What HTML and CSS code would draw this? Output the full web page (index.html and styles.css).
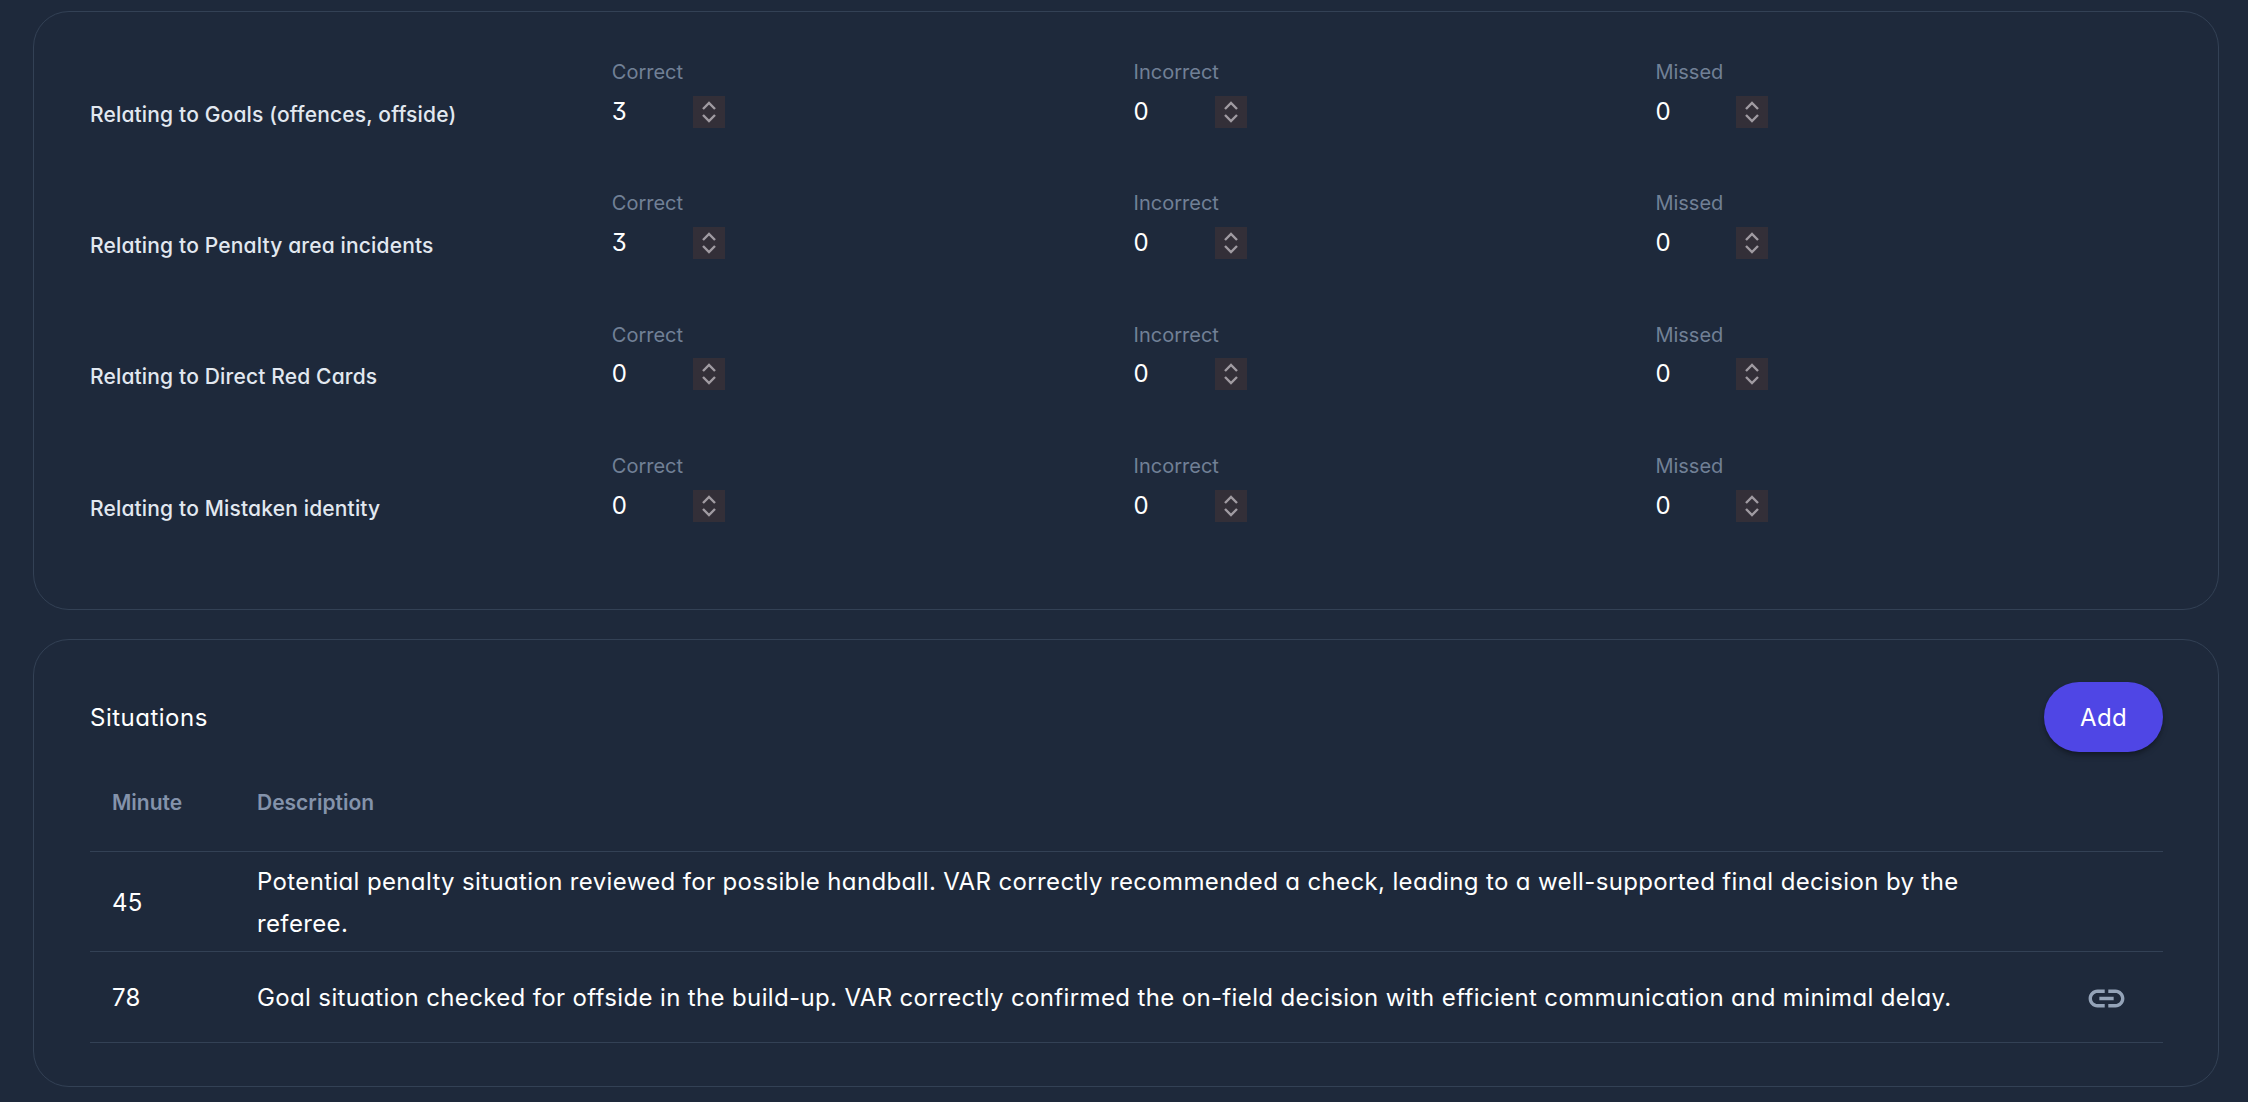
FILE: index.html
```html
<!DOCTYPE html>
<html lang="en">
<head>
    <meta charset="UTF-8">
    <meta name="viewport" content="width=device-width, initial-scale=1.0">
    <title>VAR report</title>
    <link rel="stylesheet" href="styles.css">
</head>
<body>
    <section class="card card-counts">
        <div class="count-row">
            <div class="count-label">Relating to Goals (offences, offside)</div>
            <div class="field"><label>Correct</label><div class="number"><span class="value">3</span><span class="spin"><svg viewBox="0 0 32 32"><path d="M10 13l6-6 6 6M10 19l6 6 6-6"/></svg></span></div></div>
            <div class="field"><label>Incorrect</label><div class="number"><span class="value">0</span><span class="spin"><svg viewBox="0 0 32 32"><path d="M10 13l6-6 6 6M10 19l6 6 6-6"/></svg></span></div></div>
            <div class="field"><label>Missed</label><div class="number"><span class="value">0</span><span class="spin"><svg viewBox="0 0 32 32"><path d="M10 13l6-6 6 6M10 19l6 6 6-6"/></svg></span></div></div>
        </div>
        <div class="count-row">
            <div class="count-label">Relating to Penalty area incidents</div>
            <div class="field"><label>Correct</label><div class="number"><span class="value">3</span><span class="spin"><svg viewBox="0 0 32 32"><path d="M10 13l6-6 6 6M10 19l6 6 6-6"/></svg></span></div></div>
            <div class="field"><label>Incorrect</label><div class="number"><span class="value">0</span><span class="spin"><svg viewBox="0 0 32 32"><path d="M10 13l6-6 6 6M10 19l6 6 6-6"/></svg></span></div></div>
            <div class="field"><label>Missed</label><div class="number"><span class="value">0</span><span class="spin"><svg viewBox="0 0 32 32"><path d="M10 13l6-6 6 6M10 19l6 6 6-6"/></svg></span></div></div>
        </div>
        <div class="count-row">
            <div class="count-label">Relating to Direct Red Cards</div>
            <div class="field"><label>Correct</label><div class="number"><span class="value">0</span><span class="spin"><svg viewBox="0 0 32 32"><path d="M10 13l6-6 6 6M10 19l6 6 6-6"/></svg></span></div></div>
            <div class="field"><label>Incorrect</label><div class="number"><span class="value">0</span><span class="spin"><svg viewBox="0 0 32 32"><path d="M10 13l6-6 6 6M10 19l6 6 6-6"/></svg></span></div></div>
            <div class="field"><label>Missed</label><div class="number"><span class="value">0</span><span class="spin"><svg viewBox="0 0 32 32"><path d="M10 13l6-6 6 6M10 19l6 6 6-6"/></svg></span></div></div>
        </div>
        <div class="count-row">
            <div class="count-label">Relating to Mistaken identity</div>
            <div class="field"><label>Correct</label><div class="number"><span class="value">0</span><span class="spin"><svg viewBox="0 0 32 32"><path d="M10 13l6-6 6 6M10 19l6 6 6-6"/></svg></span></div></div>
            <div class="field"><label>Incorrect</label><div class="number"><span class="value">0</span><span class="spin"><svg viewBox="0 0 32 32"><path d="M10 13l6-6 6 6M10 19l6 6 6-6"/></svg></span></div></div>
            <div class="field"><label>Missed</label><div class="number"><span class="value">0</span><span class="spin"><svg viewBox="0 0 32 32"><path d="M10 13l6-6 6 6M10 19l6 6 6-6"/></svg></span></div></div>
        </div>
    </section>

    <section class="card card-situations">
        <div class="card-header">
            <h2>Situations</h2>
            <button type="button" class="add-button">Add</button>
        </div>
        <table class="situations">
            <thead>
                <tr><th class="col-minute">Minute</th><th>Description</th><th class="col-action"></th></tr>
            </thead>
            <tbody>
                <tr class="row-tall">
                    <td class="col-minute">45</td>
                    <td>Potential penalty situation reviewed for possible handball. VAR correctly recommended a check, leading to a well-supported final decision by the referee.</td>
                    <td class="col-action"></td>
                </tr>
                <tr>
                    <td class="col-minute">78</td>
                    <td>Goal situation checked for offside in the build-up. VAR correctly confirmed the on-field decision with efficient communication and minimal delay.</td>
                    <td class="col-action"><svg class="link-icon" viewBox="0 0 24 24"><path d="M3.900 12c0-1.710 1.390-3.100 3.100-3.100h4V7H7c-2.760 0-5 2.240-5 5s2.240 5 5 5h4v-1.900H7c-1.710 0-3.100-1.390-3.100-3.100zM8 13h8v-2H8v2zm9-6h-4v1.900h4c1.710 0 3.100 1.390 3.100 3.100s-1.390 3.100-3.100 3.100h-4V17h4c2.760 0 5-2.240 5-5s-2.240-5-5-5z"/></svg></td>
                </tr>
            </tbody>
        </table>
    </section>
</body>
</html>
```

FILE: styles.css
```css
* {
    box-sizing: border-box;
}
body {
    margin: 0;
    padding: 11px 29px 15px 33px;
    background-color: #1e293b;
    color: #fff;
    font-family: Inter, "Noto Sans", sans-serif;
    font-feature-settings: "cv09", "cv11";
    font-size: 24px;
}
.card {
    border: 1px solid #334155;
    border-radius: 36px;
    padding: 0 55px 0 56px;
}
.card-counts {
    height: 599px;
    padding-top: 44px;
    margin-bottom: 29px;
}
.card-situations {
    height: 448px;
    padding-top: 42px;
}
.count-row {
    display: grid;
    grid-template-columns: repeat(3, 521.8px) 1fr;
    align-items: end;
    height: 131.4px;
    padding-bottom: 52px;
}
.count-label {
    margin-bottom: -3px;
    font-size: 21px;
    font-weight: 500;
    line-height: 48px;
    letter-spacing: 0.16px;
    color: #e2e8f0;
}
.field label {
    display: block;
    padding-top: 1px;
    font-size: 20px;
    line-height: 30.5px;
    color: #718096;
}
.number {
    display: flex;
    align-items: center;
    height: 48px;
}
.value {
    width: 81px;
    line-height: 48px;
}
.spin {
    width: 32px;
    height: 32px;
    background: #332f38;
}
.spin svg {
    display: block;
    width: 32px;
    height: 32px;
    fill: none;
    stroke: #a09ba2;
    stroke-width: 2.4;
}
.card-header {
    display: flex;
    justify-content: space-between;
    align-items: center;
}
h2 {
    margin: 0;
    font-size: 24px;
    font-weight: 400;
    letter-spacing: 0.5px;
}
.add-button {
    width: 119px;
    height: 70px;
    border: none;
    border-radius: 35px;
    background: #4f46e5;
    color: #fff;
    font: inherit;
    font-weight: 400;
    letter-spacing: 0.4px;
    box-shadow: 0 4px 6px -1px rgba(0, 0, 0, 0.3), 0 2px 4px -2px rgba(0, 0, 0, 0.3);
}
.situations {
    width: 100%;
    border-collapse: collapse;
    table-layout: fixed;
}
.situations th {
    height: 99px;
    padding: 3px 22px 0;
    text-align: left;
    font-size: 21px;
    font-weight: 600;
    color: #8493ab;
}
.situations td {
    height: 91px;
    padding: 3px 22px 0;
    line-height: 42px;
    letter-spacing: 0.36px;
    border-top: 1px solid #334155;
    border-bottom: 1px solid #334155;
}
.situations .row-tall td {
    height: 100px;
}
.col-minute {
    width: 145px;
}
.col-action {
    width: 163px;
}
.situations td.col-action {
    padding-right: 35px;
    text-align: right;
}
.link-icon {
    display: inline-block;
    vertical-align: middle;
    width: 43px;
    height: 43px;
    fill: #94a3b8;
}
```
